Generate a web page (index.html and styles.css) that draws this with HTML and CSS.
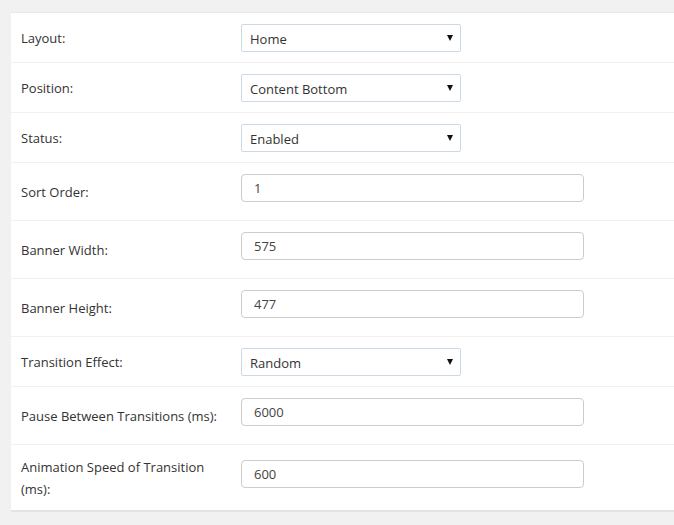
FILE: index.html
```
<html>
<head>
    <link rel="stylesheet" href="styles.css">
</head>
<body>

<section class="panel">
    <div class="row">
        <label class="name">Layout:</label>
        <div class="field"><span class="pick"><select><option>Home</option></select></span></div>
    </div>
    <div class="row">
        <label class="name">Position:</label>
        <div class="field"><span class="pick"><select><option>Content Bottom</option></select></span></div>
    </div>
    <div class="row">
        <label class="name">Status:</label>
        <div class="field"><span class="pick"><select><option>Enabled</option></select></span></div>
    </div>
    <div class="row">
        <label class="name">Sort Order:</label>
        <div class="field"><input class="text" type="text" value="1"></div>
    </div>
    <div class="row">
        <label class="name">Banner Width:</label>
        <div class="field"><input class="text" type="text" value="575"></div>
    </div>
    <div class="row">
        <label class="name">Banner Height:</label>
        <div class="field"><input class="text" type="text" value="477"></div>
    </div>
    <div class="row">
        <label class="name">Transition Effect:</label>
        <div class="field"><span class="pick"><select><option>Random</option></select></span></div>
    </div>
    <div class="row">
        <label class="name">Pause Between Transitions (ms):</label>
        <div class="field"><input class="text" type="text" value="6000"></div>
    </div>
    <div class="row">
        <label class="name">Animation Speed of Transition (ms):</label>
        <div class="field"><input class="text" type="text" value="600"></div>
    </div>
</section>

</body>
</html>
```

FILE: styles.css
```
body {
    margin: 0;
    padding: 13px 0 0 11px;
    background-color: #f1f1f1;
    font-family: "Open Sans", "Liberation Sans", sans-serif;
    font-size: 13px;
    color: #333;
}

.panel {
    background-color: white;
    border-bottom: 2px solid #e3e3e3;
    box-shadow: 0 -1px 1px rgba(0, 0, 0, 0.03);
}

.row {
    display: flex;
    align-items: center;
    padding: 11px 10px 10px 10px;
    border-bottom: 1px solid #f1f1f1;
}
.row:last-child {
    border-bottom: none;
}

.name {
    width: 200px;
    padding-right: 20px;
    line-height: 22px;
    flex-shrink: 0;
}

.field {
    flex: 1;
}

.pick {
    position: relative;
    display: inline-block;
}
.pick::after {
    content: "";
    position: absolute;
    right: 8px;
    top: 11px;
    border-left: 3.5px solid transparent;
    border-right: 3.5px solid transparent;
    border-top: 6px solid #111;
}

select {
    -webkit-appearance: none;
    appearance: none;
    display: block;
    width: 220px;
    height: 28px;
    padding: 1px 20px 0 8px;
    border: 1px solid #cdd9e4;
    border-radius: 2px;
    background-color: white;
    font-family: "Open Sans", "Liberation Sans", sans-serif;
    font-size: 13px;
    color: #333;
}

.text {
    display: block;
    box-sizing: border-box;
    width: 343px;
    height: 28px;
    margin-bottom: 8px;
    padding: 0 12px;
    border: 1px solid #cccccc;
    border-radius: 4px;
    font-family: "Open Sans", "Liberation Sans", sans-serif;
    font-size: 13px;
    color: #444;
}
```
